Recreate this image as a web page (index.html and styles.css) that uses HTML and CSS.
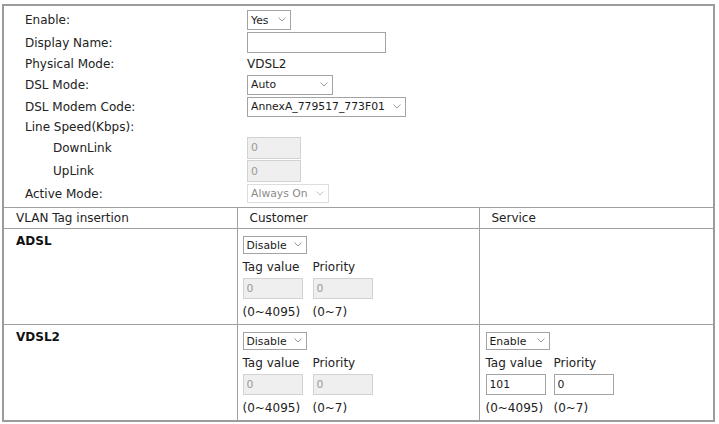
FILE: index.html
```html
<!DOCTYPE html>
<html>
<head>
<meta charset="utf-8">
<link rel="stylesheet" href="styles.css">
</head>
<body>
<div class="panel">
  <div class="form">
    <div class="row h22"><span class="label">Enable:</span>
      <span class="sel w-yes"><select><option>Yes</option></select><svg class="chev" width="8" height="5" viewBox="0 0 8 5"><path d="M0.5 0.5 L4 4 L7.5 0.5"/></svg></span></div>
    <div class="row h23"><span class="label">Display Name:</span>
      <input class="txt w-name" type="text" value=""></div>
    <div class="row h20"><span class="label">Physical Mode:</span><span>VDSL2</span></div>
    <div class="row h21"><span class="label">DSL Mode:</span>
      <span class="sel w-auto"><select><option>Auto</option></select><svg class="chev" width="8" height="5" viewBox="0 0 8 5"><path d="M0.5 0.5 L4 4 L7.5 0.5"/></svg></span></div>
    <div class="row h23"><span class="label">DSL Modem Code:</span>
      <span class="sel w-annex"><select><option>AnnexA_779517_773F01</option></select><svg class="chev" width="8" height="5" viewBox="0 0 8 5"><path d="M0.5 0.5 L4 4 L7.5 0.5"/></svg></span></div>
    <div class="row h18"><span class="label">Line Speed(Kbps):</span></div>
    <div class="row h23"><span class="label indent">DownLink</span>
      <input class="txt dis w-speed" type="text" value="0" disabled></div>
    <div class="row h24"><span class="label indent">UpLink</span>
      <input class="txt dis w-speed" type="text" value="0" disabled></div>
    <div class="row h21"><span class="label">Active Mode:</span>
      <span class="sel w-always dis"><select disabled><option>Always On</option></select><svg class="chev" width="8" height="5" viewBox="0 0 8 5"><path d="M0.5 0.5 L4 4 L7.5 0.5"/></svg></span></div>
  </div>
  <table class="vlan">
    <colgroup><col class="c1"><col class="c2"><col class="c3"></colgroup>
    <tr class="head"><th>VLAN Tag insertion</th><th>Customer</th><th>Service</th></tr>
    <tr>
      <td class="mode">ADSL</td>
      <td class="cfg">
        <div class="vgrid">
          <span class="sel w-dis vs"><select><option>Disable</option></select><svg class="chev" width="8" height="5" viewBox="0 0 8 5"><path d="M0.5 0.5 L4 4 L7.5 0.5"/></svg></span>
          <span class="t">Tag value</span><span class="t">Priority</span>
          <input class="txt dis w-tag" type="text" value="0" disabled><input class="txt dis w-tag" type="text" value="0" disabled>
          <span class="t">(0~4095)</span><span class="t">(0~7)</span>
        </div>
      </td>
      <td class="cfg"></td>
    </tr>
    <tr class="last">
      <td class="mode">VDSL2</td>
      <td class="cfg">
        <div class="vgrid">
          <span class="sel w-dis vs"><select><option>Disable</option></select><svg class="chev" width="8" height="5" viewBox="0 0 8 5"><path d="M0.5 0.5 L4 4 L7.5 0.5"/></svg></span>
          <span class="t">Tag value</span><span class="t">Priority</span>
          <input class="txt dis w-tag" type="text" value="0" disabled><input class="txt dis w-tag" type="text" value="0" disabled>
          <span class="t">(0~4095)</span><span class="t">(0~7)</span>
        </div>
      </td>
      <td class="cfg svc">
        <div class="vgrid narrow">
          <span class="sel w-dis vs"><select><option>Enable</option></select><svg class="chev" width="8" height="5" viewBox="0 0 8 5"><path d="M0.5 0.5 L4 4 L7.5 0.5"/></svg></span>
          <span class="t">Tag value</span><span class="t">Priority</span>
          <input class="txt w-tag" type="text" value="101"><input class="txt w-tag" type="text" value="0">
          <span class="t">(0~4095)</span><span class="t">(0~7)</span>
        </div>
      </td>
    </tr>
  </table>
</div>
</body>
</html>
```

FILE: styles.css
```css
html, body {
  margin: 0;
  background: #ffffff;
}
body {
  padding: 4px 4px 0 2px;
  font-family: "DejaVu Sans", Verdana, sans-serif;
  font-size: 12px;
  color: #222222;
}
.panel {
  width: 709px;
  border: 2px solid #9c9c9c;
}
.form {
  padding: 3px 0 3px 21px;
}
.row {
  display: flex;
  align-items: center;
}
.h18 { height: 18px; }
.h20 { height: 20px; }
.h21 { height: 21px; }
.h22 { height: 22px; }
.h23 { height: 23px; }
.h24 { height: 24px; }
.label {
  width: 222px;
  flex: none;
}
.label.indent {
  width: 194px;
  padding-left: 28px;
}

/* select */
.sel {
  position: relative;
  display: inline-block;
  height: 20px;
}
.sel select {
  -webkit-appearance: none;
  appearance: none;
  width: 100%;
  height: 100%;
  margin: 0;
  padding: 0 0 0 3px;
  border: 1px solid #a3a3a3;
  border-radius: 0;
  background: #ffffff;
  font-family: "DejaVu Sans", Verdana, sans-serif;
  font-size: 10.8px;
  color: #1a1a1a;
  outline: none;
}
.sel .chev {
  position: absolute;
  right: 5px;
  top: 50%;
  margin-top: -3px;
  pointer-events: none;
}
.chev path {
  fill: none;
  stroke: #9a9a9a;
  stroke-width: 1;
}
.sel.dis select {
  border-color: #dddddd;
  color: #8a8a8a;
  opacity: 1;
}
.sel.dis .chev path {
  stroke: #c4c4c4;
}
.w-yes { width: 44px; }
.w-auto { width: 86px; }
.w-annex { width: 159px; }
.w-always { width: 82px; height: 19px; }
.w-dis { width: 64px; height: 18px; }

/* text inputs */
.txt {
  box-sizing: border-box;
  margin: 0;
  padding: 0 0 0 3px;
  border: 1px solid #a3a3a3;
  border-radius: 0;
  background: #ffffff;
  font-family: "DejaVu Sans", Verdana, sans-serif;
  font-size: 10.8px;
  color: #1a1a1a;
  outline: none;
}
.txt.dis {
  background: #efefef;
  border-color: #d2d2d2;
  color: #9a9a9a;
}
.w-name { width: 139px; height: 21px; }
.w-speed { width: 54px; height: 22px; }
.w-tag { width: 60px; height: 21px; }

/* vlan table */
.vlan {
  width: 709px;
  border-collapse: collapse;
  table-layout: fixed;
}
.vlan .c1 { width: 233px; }
.vlan .c2 { width: 242px; }
.vlan th, .vlan td {
  border: 1px solid #a0a0a0;
  padding: 0;
}
.vlan tr > :first-child { border-left: none; }
.vlan tr > :last-child { border-right: none; }
.vlan tr.last > * { border-bottom: none; }
.vlan th {
  height: 20px;
  padding: 0 12px;
  font-weight: normal;
  text-align: left;
}
.vlan td {
  vertical-align: top;
}
.vlan td.mode {
  padding: 5px 12px;
  font-weight: bold;
  color: #111111;
}
.vlan td.cfg {
  padding: 7px 5px 3px 5px;
}
.vlan td.cfg.svc {
  padding-left: 6px;
}
.vgrid {
  display: grid;
  grid-template-columns: 70px 70px;
  align-items: center;
}
.vgrid.narrow {
  grid-template-columns: 68px 70px;
}
.vgrid .vs {
  grid-column: 1 / span 2;
  margin-bottom: 4px;
}
.vgrid .t {
  height: 18px;
  line-height: 18px;
}
.vgrid .w-tag {
  margin: 2px 0 4px;
}
```
